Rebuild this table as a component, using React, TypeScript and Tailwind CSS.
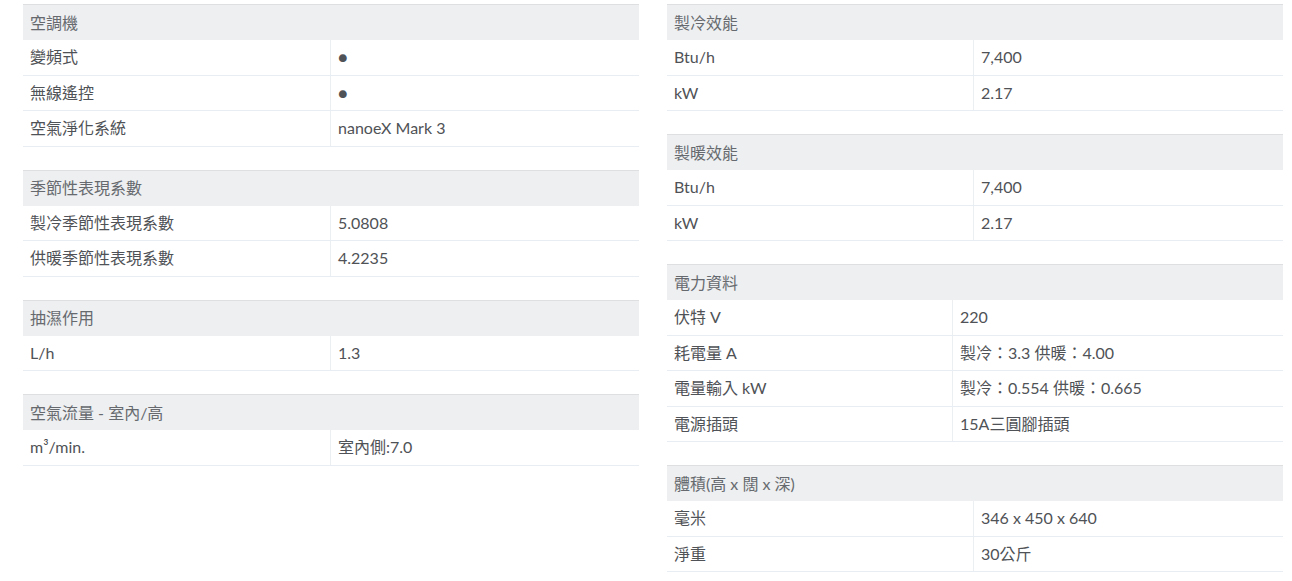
type Row = [string, string]

type Spec = {
    title: string
    rows: Row[]
    labelW: string
}

const left: Spec[] = [
    { title: "空調機", labelW: "w-[308px]", rows: [["變頻式", "●"], ["無線遙控", "●"], ["空氣淨化系統", "nanoeX Mark 3"]] },
    { title: "季節性表現系數", labelW: "w-[308px]", rows: [["製冷季節性表現系數", "5.0808"], ["供暖季節性表現系數", "4.2235"]] },
    { title: "抽濕作用", labelW: "w-[308px]", rows: [["L/h", "1.3"]] },
    { title: "空氣流量 - 室內/高", labelW: "w-[308px]", rows: [["m³/min.", "室內側:7.0"]] },
]

const right: Spec[] = [
    { title: "製冷效能", labelW: "w-[307px]", rows: [["Btu/h", "7,400"], ["kW", "2.17"]] },
    { title: "製暖效能", labelW: "w-[307px]", rows: [["Btu/h", "7,400"], ["kW", "2.17"]] },
    {
        title: "電力資料", labelW: "w-[286px]", rows: [
            ["伏特 V", "220"],
            ["耗電量 A", "製冷：3.3 供暖：4.00"],
            ["電量輸入 kW", "製冷：0.554 供暖：0.665"],
            ["電源插頭", "15A三圓腳插頭"],
        ]
    },
    { title: "體積(高 x 闊 x 深)", labelW: "w-[307px]", rows: [["毫米", "346 x 450 x 640"], ["淨重", "30公斤"]] },
]

function SpecTable({ spec }: { spec: Spec }) {
    return (
        <div className="w-[616px]">
            <div className="h-[36px] flex items-center px-[7px] bg-[#eeeff1] border-t border-[#dedfe1] text-[#666a6e]">
                {spec.title}
            </div>
            {spec.rows.map(([label, value], i) => (
                <div key={i} className="h-[35.5px] flex border-b border-[#e7edf2]">
                    <div className={`${spec.labelW} shrink-0 flex items-center px-[7px] border-r border-[#eceff2]`}>
                        {label}
                    </div>
                    <div className="flex items-center px-[7px]">{value}</div>
                </div>
            ))}
        </div>
    )
}

export default function App() {
    return (
        <div className="w-[1292px] h-[581px] bg-white pt-[4px] pl-[23px] flex gap-[28px] text-[16px] text-[#4f5256] font-['Lato','Noto_Sans_CJK_TC',sans-serif] leading-none overflow-hidden">
            <div className="flex flex-col gap-[23px]">
                {left.map(s => <SpecTable key={s.title} spec={s} />)}
            </div>
            <div className="flex flex-col gap-[23px]">
                {right.map(s => <SpecTable key={s.title} spec={s} />)}
            </div>
        </div>
    )
}
